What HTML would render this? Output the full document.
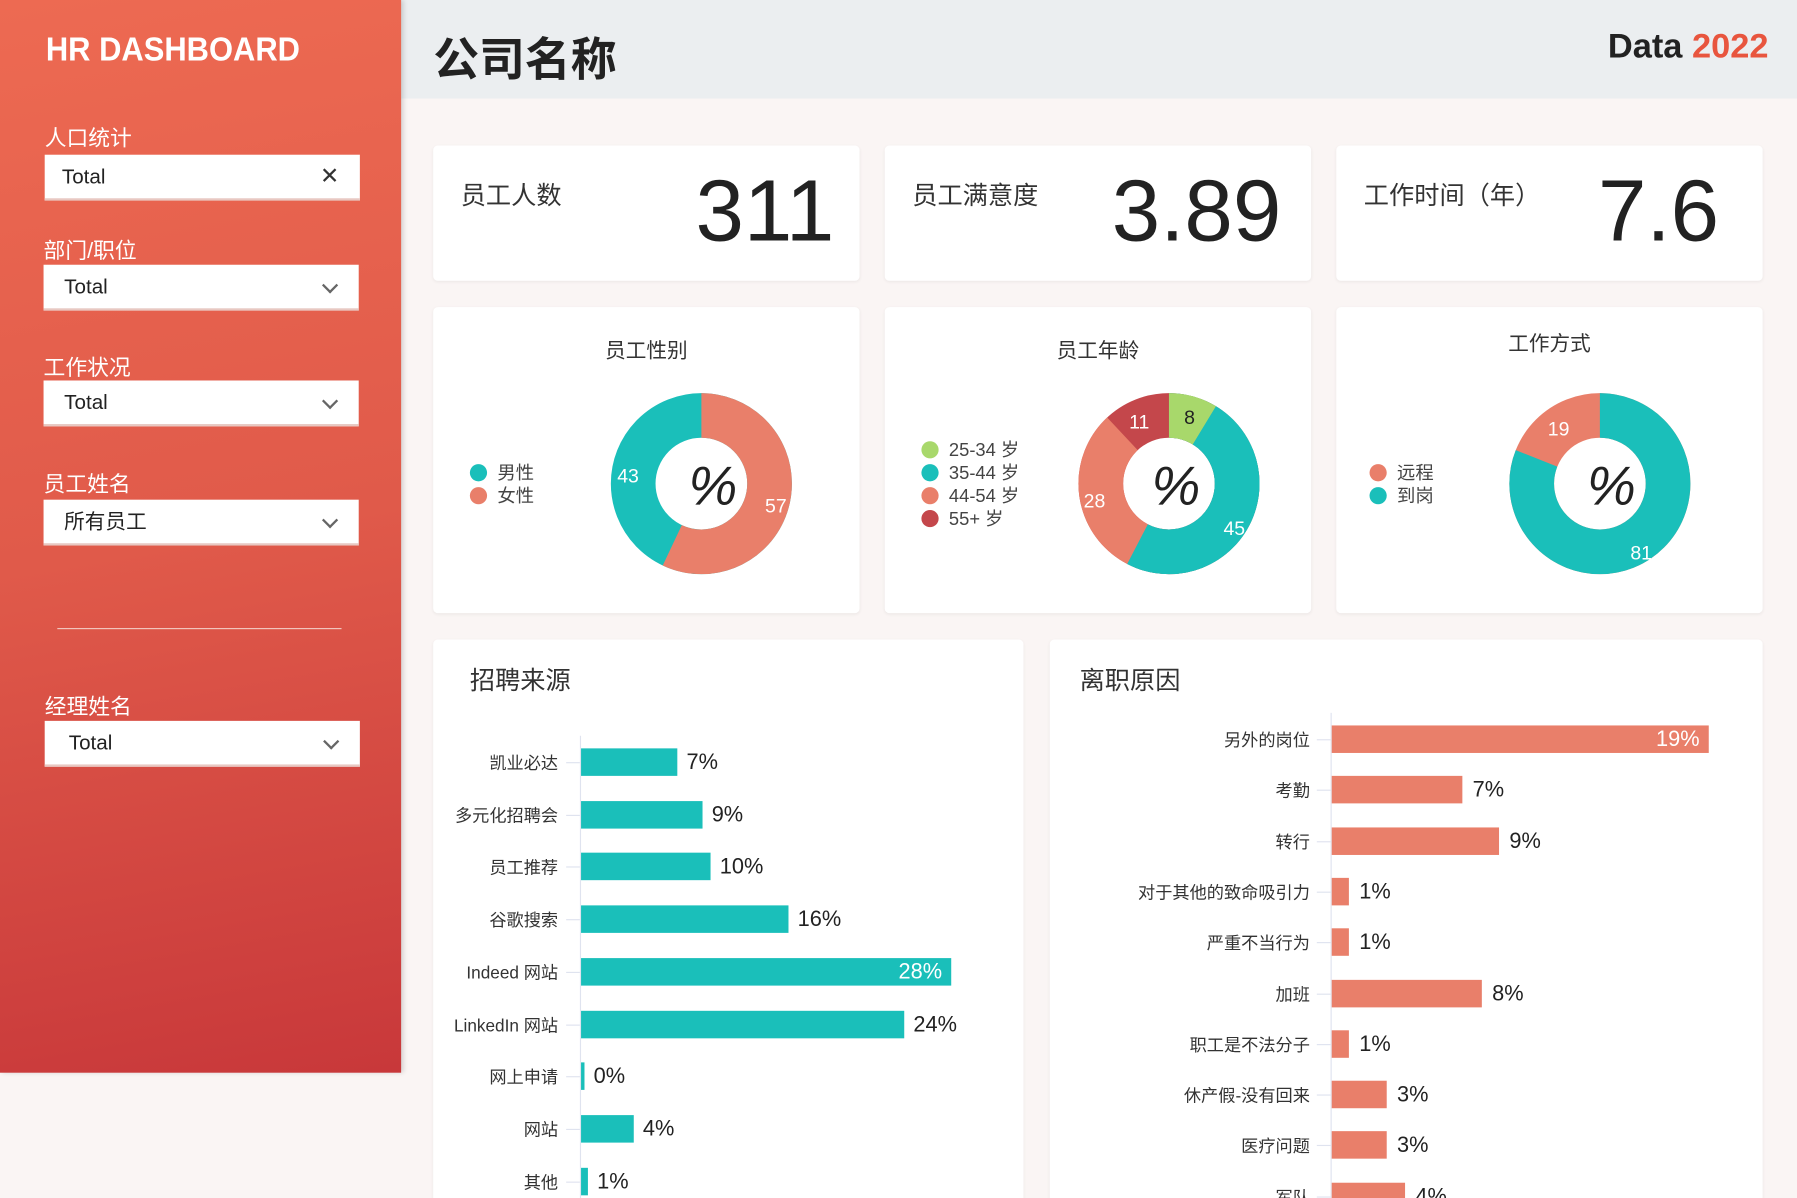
<!DOCTYPE html>
<html><head><meta charset="utf-8"><style>
*{margin:0;padding:0;box-sizing:border-box}
html,body{width:1797px;height:1198px;overflow:hidden;background:#faf5f4}
#w{width:1568px;height:1046px;transform:scale(1.14605);transform-origin:0 0;position:relative;font-family:"Liberation Sans","Noto Sans CJK SC",sans-serif;color:#333}
.a{position:absolute}
#side{left:0;top:0;width:350px;height:936px;background:linear-gradient(170deg,#ed6a52 0%,#e05a4a 50%,#c8383a 100%);box-shadow:2px 0 4px rgba(0,0,0,.15)}
.lab{color:#fff;font-size:19px;left:39px}
.box{background:#fff;height:40px;width:275px;border-bottom:2px solid #e8c8c2;font-size:18px;color:#222;padding-left:18px;line-height:39px}
.chev{position:absolute;right:20px;top:13px;width:10px;height:10px;border-right:2px solid #666;border-bottom:2px solid #666;transform:rotate(45deg)}
.card{background:#fff;border-radius:4px;box-shadow:0 1px 3px rgba(0,0,0,.06)}
.kl{font-size:22px;color:#333}
.kn{font-size:76px;color:#222;text-align:right}
.ct{font-size:18px;color:#333;text-align:center;width:100%}
.leg{font-size:16px;color:#444;line-height:20px}
.dot{display:inline-block;width:15px;height:15px;border-radius:50%;vertical-align:-2px;margin-right:9px}
.bl{font-size:15px;color:#333;text-align:right;width:160px}
.bar{height:24px}
.pv{font-size:19px;color:#222}
</style></head><body><div id="w">
<div class="a" style="left:350px;top:0;width:1218px;height:86px;background:#ebeef0"></div>
<div class="a" style="left:378px;top:20px;font-size:40px;font-weight:bold;color:#222">公司名称</div>
<div class="a" style="left:1403px;top:24px;font-size:30px;font-weight:bold;color:#222">Data <span style="color:#e8553e">2022</span></div>

<div class="a" id="side"></div>
<div class="a" style="left:40px;top:28px;font-size:29px;font-weight:bold;color:#fff;transform:scaleX(.93);transform-origin:0 0">HR DASHBOARD</div>
<div class="a lab" style="top:106px">人口统计</div>
<div class="a box" style="left:39px;top:135px;padding-left:15px">Total<span style="position:absolute;right:18px;top:0;font-size:20px;color:#333">✕</span></div>
<div class="a lab" style="top:204px;left:38px">部门/职位</div>
<div class="a box" style="left:38px;top:231px">Total<span class="chev"></span></div>
<div class="a lab" style="top:306px;left:38px">工作状况</div>
<div class="a box" style="left:38px;top:332px">Total<span class="chev"></span></div>
<div class="a lab" style="top:408px;left:38px">员工姓名</div>
<div class="a box" style="left:38px;top:436px">所有员工<span class="chev"></span></div>
<div class="a" style="left:50px;top:548px;width:248px;height:1px;background:#f3c8c0"></div>
<div class="a lab" style="top:602px;left:39px">经理姓名</div>
<div class="a box" style="left:39px;top:629px;padding-left:21px">Total<span class="chev"></span></div>

<div class="a card" style="left:378px;top:127px;width:372px;height:118px"><div class="a kl" style="left:24px;top:26px">员工人数</div><div class="a kn" style="right:22px;top:14px">311</div></div>
<div class="a card" style="left:772px;top:127px;width:372px;height:118px"><div class="a kl" style="left:24px;top:26px">员工满意度</div><div class="a kn" style="right:26px;top:14px">3.89</div></div>
<div class="a card" style="left:1166px;top:127px;width:372px;height:118px"><div class="a kl" style="left:24px;top:26px">工作时间（年）</div><div class="a kn" style="right:38px;top:14px">7.6</div></div>

<div class="a card" style="left:378px;top:268px;width:372px;height:267px">
<div class="a ct" style="top:24px">员工性别</div>
<div class="a leg" style="left:32px;top:136px"><span class="dot" style="background:#1abfba"></span>男性<br><span class="dot" style="background:#e97f6a"></span>女性</div>
</div>
<div class="a card" style="left:772px;top:268px;width:372px;height:267px">
<div class="a ct" style="top:24px">员工年龄</div>
<div class="a leg" style="left:32px;top:116px"><span class="dot" style="background:#a8d86b"></span>25-34 岁<br><span class="dot" style="background:#1abfba"></span>35-44 岁<br><span class="dot" style="background:#e97f6a"></span>44-54 岁<br><span class="dot" style="background:#c4474b"></span>55+ 岁</div>
</div>
<div class="a card" style="left:1166px;top:268px;width:372px;height:267px">
<div class="a ct" style="top:18px">工作方式</div>
<div class="a leg" style="left:29px;top:136px"><span class="dot" style="background:#e97f6a"></span>远程<br><span class="dot" style="background:#1abfba"></span>到岗</div>
</div>

<svg class="a" style="left:0;top:0" width="1568" height="1046" font-family="Liberation Sans, sans-serif">
<g transform="translate(612,422) rotate(-90)" fill="none" stroke-width="39">
<circle r="59.5" stroke="#1abfba"/>
<circle r="59.5" stroke="#e97f6a" stroke-dasharray="213.1 400"/>
</g>
<g transform="translate(1020,422) rotate(-90)" fill="none" stroke-width="39">
<circle r="59.5" stroke="#c4474b"/>
<circle r="59.5" stroke="#e97f6a" stroke-dasharray="329 400"/>
<circle r="59.5" stroke="#1abfba" stroke-dasharray="215.3 400"/>
<circle r="59.5" stroke="#a8d86b" stroke-dasharray="32.5 400"/>
<circle r="59.5" stroke="#1abfba" stroke-dasharray="182.8 400" stroke-dashoffset="-32.5"/>
</g>
<g transform="translate(1396,422) rotate(-90)" fill="none" stroke-width="39">
<circle r="59.5" stroke="#e97f6a"/>
<circle r="59.5" stroke="#1abfba" stroke-dasharray="302.8 400"/>
</g>
<g font-size="48" fill="#222" text-anchor="middle" font-style="italic"><text x="622" y="440">%</text><text x="1026" y="440">%</text><text x="1406" y="440">%</text></g>
<g font-size="17" fill="#fff" text-anchor="middle">
<text x="548" y="421">43</text><text x="677" y="447">57</text>
<text x="1038" y="370" fill="#222">8</text><text x="994" y="374">11</text><text x="955" y="443">28</text><text x="1077" y="467">45</text>
<text x="1360" y="380">19</text><text x="1432" y="488">81</text>
</g>
</svg>

<div class="a card" style="left:378px;top:558px;width:515px;height:500px">
<div class="a" style="left:32px;top:18px;font-size:22px;color:#333">招聘来源</div>
</div>
<div class="a card" style="left:916px;top:558px;width:622px;height:500px">
<div class="a" style="left:26px;top:18px;font-size:22px;color:#333">离职原因</div>
</div>
<div class="a" style="left:506px;top:642px;width:1px;height:404px;background:#dfe3ef"></div>
<div class="a" style="left:1161px;top:622px;width:1px;height:424px;background:#dfe3ef"></div>

<div id="b1"></div>
<script>
var d1=[["凯业必达",84,"7%"],["多元化招聘会",106,"9%"],["员工推荐",113,"10%"],["谷歌搜索",181,"16%"],["Indeed 网站",323,"28%",1],["LinkedIn 网站",282,"24%"],["网上申请",3,"0%"],["网站",46,"4%"],["其他",6,"1%"]];
var d2=[["另外的岗位",329,"19%",1],["考勤",114,"7%"],["转行",146,"9%"],["对于其他的致命吸引力",15,"1%"],["严重不当行为",15,"1%"],["加班",131,"8%"],["职工是不法分子",15,"1%"],["休产假-没有回来",48,"3%"],["医疗问题",48,"3%"],["军队",64,"4%"]];
var h="";
d1.forEach(function(r,i){var y=665+i*45.7;
h+='<div class="a bl" style="left:327px;top:'+(y-10)+'px">'+r[0]+'</div><div class="a" style="left:494px;top:'+y+'px;width:12px;height:1px;background:#dfe3ef"></div>';
h+='<div class="a bar" style="left:507px;top:'+(y-12)+'px;width:'+r[1]+'px;background:#1abfba"></div>';
if(r[3])h+='<div class="a pv" style="left:'+(507+r[1]-46)+'px;top:'+(y-10)+'px;color:#fff">'+r[2]+'</div>';
else h+='<div class="a pv" style="left:'+(507+r[1]+8)+'px;top:'+(y-10)+'px">'+r[2]+'</div>';});
d2.forEach(function(r,i){var y=645+i*44.3;
h+='<div class="a bl" style="top:'+(y-10)+'px;width:200px;left:943px">'+r[0]+'</div><div class="a" style="left:1149px;top:'+y+'px;width:12px;height:1px;background:#dfe3ef"></div>';
h+='<div class="a bar" style="left:1162px;top:'+(y-12)+'px;width:'+r[1]+'px;background:#e97f6a"></div>';
if(r[3])h+='<div class="a pv" style="left:'+(1162+r[1]-46)+'px;top:'+(y-10)+'px;color:#fff">'+r[2]+'</div>';
else h+='<div class="a pv" style="left:'+(1162+r[1]+9)+'px;top:'+(y-10)+'px">'+r[2]+'</div>';});
document.getElementById("b1").innerHTML=h;
</script>
</div></body></html>
